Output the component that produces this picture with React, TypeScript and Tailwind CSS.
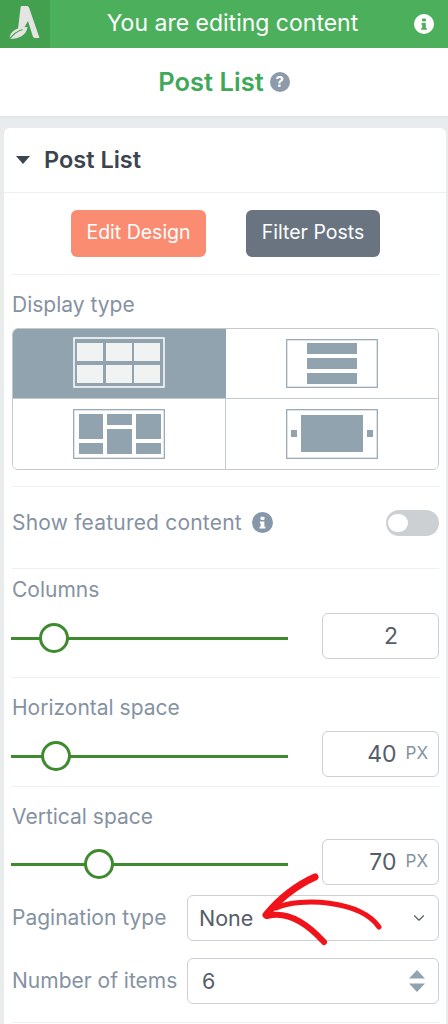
import { ReactNode } from "react"
import { ChevronDown } from "lucide-react"

const font = { fontFamily: '"Inter", "Liberation Sans", sans-serif' }

function InfoDot({ className }: { className: string }) {
  return (
    <span className={`inline-flex items-center justify-center rounded-full ${className}`}>
      <svg viewBox="0 0 20 20" className="h-full w-full">
        <rect x="8" y="4.500" width="4" height="3" rx="1" fill="currentColor" />
        <path d="M7.500 9h4.300v5h1v1.700h-5.600V14h1v-3.300h-.7z" fill="currentColor" />
      </svg>
    </span>
  )
}

function Logo() {
  return (
    <svg viewBox="0 0 50 48" className="h-12 w-[50px]">
      <path d="M21.500 6h5c1.500 0 2.300.6 2.800 2.200L39.500 38h-4.200c-1.200 0-2-.6-2.500-1.800L28 21l-4 7c-2 0-4 .3-6 1l2.500-21c.2-1.300.5-2 1-2z" fill="#e4e4e2" />
      <path d="M9.500 39c0-7 6-12 18-12-1 8-8 12-18 12z" fill="#e4e4e2" />
      <path d="M9.500 39c4-5 8-8 13-9.500" stroke="#43a04f" strokeWidth="1.300" fill="none" />
    </svg>
  )
}

function Row({ className = "", children }: { className?: string; children: ReactNode }) {
  return <div className={`ml-2 mr-[7px] border-b border-[#eef0f0] ${className}`}>{children}</div>
}

function Label({ children, className = "" }: { children: ReactNode; className?: string }) {
  return <div className={`text-[21px] leading-7 text-[#8592a2] ${className}`}>{children}</div>
}

function Slider({ pos, value, unit }: { pos: number; value: string; unit?: string }) {
  return (
    <div className="flex items-center justify-between">
      <div className="relative -ml-px h-[46px] w-[277px]">
        <div className="absolute top-[23.500px] h-[3px] w-full bg-[#3f8a2e]" />
        <div
          className="absolute top-[10px] h-[30px] w-[30px] rounded-full border-[3px] border-[#3f8a2e] bg-white"
          style={{ left: pos }}
        />
      </div>
      <div className="flex h-[46px] w-[117px] items-center justify-end rounded-md border border-[#ccd0d4] pr-[10px] text-[23px] text-[#555d68]">
        <span>{value}</span>
        {unit ? (
          <span className="ml-[9px] text-[17px] text-[#8592a2]">{unit}</span>
        ) : (
          <span className="w-[30px]" />
        )}
      </div>
    </div>
  )
}

function Cell({ active, className, children }: { active?: boolean; className: string; children: ReactNode }) {
  return (
    <div className={`flex items-center justify-center ${active ? "bg-[#92a3b0]" : "bg-white"} ${className}`}>
      {children}
    </div>
  )
}

export default function App() {
  return (
    <div className="relative h-[1024px] w-[448px] overflow-hidden bg-[#e9ecec]" style={font}>
      <header className="flex h-12 items-center bg-[#4caf5c] text-white">
        <div className="h-12 w-[50px] bg-[#43a04f]">
          <Logo />
        </div>
        <div className="flex-1 pb-[2px] pl-px text-center text-[23px]">You are editing content</div>
        <InfoDot className="mr-[14px] h-5 w-5 bg-white text-[#4caf5c]" />
      </header>

      <div className="flex h-[70px] items-center justify-center gap-[6px] border-b-2 border-[#e3e6e6] bg-white">
        <span className="text-[25.500px] font-semibold text-[#3fa959]">Post List</span>
        <span className="flex h-5 w-5 items-center justify-center rounded-full bg-[#8d9aa9] text-[15px] font-bold text-white">?</span>
      </div>

      <main className="ml-1 mr-[2px] mt-[10px] h-[900px] rounded-t-md bg-white">
        <div className="flex h-[65px] items-center border-b border-[#eef0f0] pl-3">
          <svg viewBox="0 0 14 8" className="h-2 w-[14px]">
            <path d="M0 0h14L7 8z" fill="#3c4450" />
          </svg>
          <span className="ml-[14px] text-[23.500px] font-semibold text-[#3c4450]">Post List</span>
        </div>

        <Row className="flex h-[82px] items-center justify-center gap-10 pb-px">
          <button className="h-[47px] w-[135px] rounded-md bg-[#fa8c72] text-[19.500px] text-white">Edit Design</button>
          <button className="h-[47px] w-[134px] rounded-md bg-[#6a7480] text-[19.500px] text-white">Filter Posts</button>
        </Row>

        <Row className="h-[212px] pt-4">
          <Label>Display type</Label>
          <div className="mt-[9px] grid h-[142px] w-[427px] grid-cols-[213px_1fr] grid-rows-[70px_1fr] overflow-hidden rounded-md border border-[#c4c9ce]">
            <Cell active className="border-b border-[#c4c9ce]">
              <svg viewBox="0 0 92 51" className="mb-[2px] mr-[2px] h-[51px] w-[92px]">
                <rect x="1" y="1" width="90" height="49" fill="#92a3b0" stroke="#fff" strokeWidth="1.500" />
                {[4, 33, 61].map((x) =>
                  [6, 28].map((y) => <rect key={`${x}-${y}`} x={x} y={y} width="26" height="18" fill="#f1f2f2" />),
                )}
              </svg>
            </Cell>
            <Cell className="border-b border-[#c4c9ce]">
              <svg viewBox="0 0 92 49" className="h-[49px] w-[92px]">
                <rect x=".7" y=".7" width="90.600" height="47.600" fill="#fff" stroke="#92a3b0" strokeWidth="1.200" />
                <path d="M21 4h50v11H21zM21 19h50v11H21zM21 34h50v11H21z" fill="#92a3b0" />
              </svg>
            </Cell>
            <Cell className="border-r border-[#c4c9ce]">
              <svg viewBox="0 0 92 50" className="h-[50px] w-[92px]">
                <rect x=".7" y=".7" width="90.600" height="48.600" fill="#fff" stroke="#92a3b0" strokeWidth="1.200" />
                <path d="M6 5h24v25H6zM34 5h25v11H34zM63 5h25v25H63zM6 34h24v11H6zM34 20h25v25H34zM63 34h25v11H63z" fill="#92a3b0" />
              </svg>
            </Cell>
            <Cell className="">
              <svg viewBox="0 0 92 50" className="h-[50px] w-[92px]">
                <rect x=".7" y=".7" width="90.600" height="48.600" fill="#fff" stroke="#92a3b0" strokeWidth="1.200" />
                <path d="M15 6h62v37H15zM5 21h6v7H5zM81 21h6v7h-6z" fill="#92a3b0" />
              </svg>
            </Cell>
          </div>
        </Row>

        <Row className="flex h-[82px] items-center justify-between pb-[10px]">
          <div className="flex items-center gap-[10px]">
            <Label className="tracking-[0.2px]">Show featured content</Label>
            <InfoDot className="h-[21px] w-[21px] bg-[#8597a8] text-white" />
          </div>
          <div className="flex h-[26px] w-[53px] items-center rounded-full bg-[#ccd0d3] pl-[2px]">
            <div className="h-[18px] w-5 rounded-full bg-white" />
          </div>
        </Row>

        <Row className="h-[109px] pt-[7px]">
          <Label>Columns</Label>
          <div className="mt-[9px]">
            <Slider pos={28} value="2" />
          </div>
        </Row>

        <Row className="h-[109px] pt-4">
          <Label>Horizontal space</Label>
          <div className="mt-[9px]">
            <Slider pos={30} value="40" unit="PX" />
          </div>
        </Row>

        <div className="ml-2 mr-[7px] pt-[16px]">
          <Label>Vertical space</Label>
          <div className="mt-[8px]">
            <Slider pos={73} value="70" unit="PX" />
          </div>
        </div>

        <div className="ml-2 mr-[7px] mt-[10px] flex items-center justify-between">
          <Label>Pagination type</Label>
          <div className="flex h-[46px] w-[252px] items-center justify-between rounded-md border border-[#ccd0d4] pl-[11px] pr-[10px] text-[21.500px] text-[#555d68]">
            None
            <ChevronDown className="h-[18px] w-[18px] text-[#555d68]" strokeWidth={1.500} />
          </div>
        </div>

        <div className="ml-2 mr-[7px] mt-[17px] flex items-center justify-between border-b border-[#eef0f0] pb-[18px]">
          <Label>Number of items</Label>
          <div className="flex h-[46px] w-[252px] items-center justify-between rounded-md border border-[#ccd0d4] pl-[14px] pr-[13px] text-[21.500px] text-[#555d68]">
            6
            <svg viewBox="0 0 16 22" className="h-[22px] w-4">
              <path d="M8 0l8 8.500H0zM8 22L0 13.500h16z" fill="#92a3b0" />
            </svg>
          </div>
        </div>
      </main>

      {/* hand-drawn arrow over the select */}
      <svg className="pointer-events-none absolute left-0 top-0" width="448" height="1024" fill="none" stroke="#f0141a" strokeLinecap="round" strokeLinejoin="round">
        <path d="M315 877C295 886 280 898 266 915" strokeWidth="7" />
        <path d="M267 916C285 911 305 921 324 942" strokeWidth="6" />
        <path d="M276 908C300 897 360 900 379 927" strokeWidth="5" />
      </svg>
    </div>
  )
}
